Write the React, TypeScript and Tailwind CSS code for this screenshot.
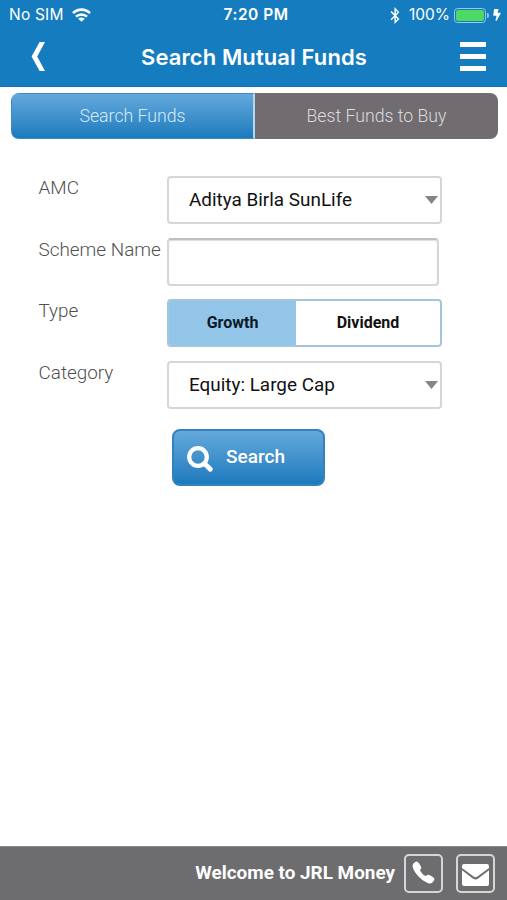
import type { ReactNode } from 'react'
import { FaBluetoothB, FaBolt } from 'react-icons/fa'
import { IoCall } from 'react-icons/io5'

function StatusBar() {
  return (
    <div className="grid h-[30px] grid-cols-3 items-center pl-[9px] pr-[6px] font-['Inter'] text-[15.5px] leading-[30px]">
      <div className="flex items-center gap-[8px]">
        <span className="tracking-[0.2px]">No SIM</span>
        <svg className="h-[14px] w-[19px]" viewBox="0 0 19 14" fill="none" stroke="currentColor" strokeWidth="2.6">
          <path d="M1 5.2C5.7.4 13.3.4 18 5.2" />
          <path d="M4 8.7c3-3 8-3 11 0" />
          <path d="M9.5 13.8 6.2 10.7c1.8-1.7 4.8-1.7 6.6 0z" fill="currentColor" stroke="none" />
        </svg>
      </div>
      <span className="pl-[2px] text-center font-semibold tracking-[0.5px]">7:20 PM</span>
      <div className="flex items-center justify-end">
        <FaBluetoothB className="mr-[7px] h-[17px] w-[14px]" />
        <span>100%</span>
        <span className="ml-[4px] h-[15px] w-[32px] rounded-[3.5px] border border-[#9cc8e6] p-px">
          <span className="block h-full w-full rounded-[2px] bg-[#4cd964]" />
        </span>
        <span className="ml-px h-[5px] w-[2px] rounded-r-full bg-[#9cc8e6]" />
        <FaBolt className="ml-[4px] h-[12px] w-[8px]" />
      </div>
    </div>
  )
}

function Header() {
  return (
    <header className="h-[87px] border-b border-[#1271b4] bg-[#167cc0] text-white">
      <StatusBar />
      <div className="flex h-[54px] items-center justify-between pl-[31px] pr-[21px]">
        <svg className="mb-[2px] h-[29px] w-[14px]" viewBox="0 0 14 29" fill="currentColor">
          <path d="M8.6 0H14L6.2 14.5 14 29H8.6L.6 14.5z" />
        </svg>
        <h1 className="ml-[3px] whitespace-nowrap font-['Inter'] text-[22px] font-semibold tracking-[0.1px]">
          Search Mutual Funds
        </h1>
        <div className="mb-px flex w-[26px] flex-col gap-[7px]">
          <span className="h-[5px] bg-white" />
          <span className="h-[5px] bg-white" />
          <span className="h-[5px] bg-white" />
        </div>
      </div>
    </header>
  )
}

function Row({ label, children }: { label: string; children: ReactNode }) {
  return (
    <div className="flex h-[48px] items-start">
      <label className="w-[129px] whitespace-nowrap pl-[0.5px] text-[18.9px] font-light leading-[23px] text-[#505050]">
        {label}
      </label>
      {children}
    </div>
  )
}

function Select({ value }: { value: string }) {
  return (
    <div className="flex h-[48px] w-[275px] items-center justify-between rounded-[4px] border-2 border-[#d6d6d6] pl-[20px] pr-[2px] text-[18.9px] text-[#111]">
      <span className="whitespace-nowrap">{value}</span>
      <svg className="h-[8px] w-[13px]" viewBox="0 0 13 8" fill="#858585">
        <path d="M0 0h13L6.5 8z" />
      </svg>
    </div>
  )
}

export default function App() {
  return (
    <div className="flex h-[900px] w-[507px] flex-col bg-white font-['Roboto',sans-serif]">
      <Header />

      <div className="ml-[11px] mr-[9px] mt-[6px] flex h-[46px] overflow-hidden rounded-[8px] text-[17.7px] font-light">
        <button className="w-[244px] border border-r-2 border-[#3a8cc5] border-r-[#b5d8ef] bg-linear-to-b from-[#63a9dc] to-[#197abd] pt-px text-[#d5eaf7]">
          Search Funds
        </button>
        <button className="flex-1 bg-[#706c70] pt-px text-[#dcdadc]">Best Funds to Buy</button>
      </div>

      <main className="flex flex-1 flex-col gap-[13.7px] pl-[38px] pt-[37px]">
        <Row label="AMC">
          <Select value="Aditya Birla SunLife" />
        </Row>
        <Row label="Scheme Name">
          <input className="h-[48px] w-[272px] rounded-[4px] border-2 border-[#d6d6d6] border-t-[#c0c0c0] shadow-[inset_0_1px_1px_#ddd]" />
        </Row>
        <Row label="Type">
          <div className="flex h-[48px] w-[275px] overflow-hidden rounded-[4px] border-2 border-[#a3c6dc] text-[16px] font-bold text-[#111]">
            <button className="w-[127px] bg-[#92c5e7] text-[#0a1a2a]">Growth</button>
            <button className="flex-1">Dividend</button>
          </div>
        </Row>
        <Row label="Category">
          <Select value="Equity: Large Cap" />
        </Row>
        <button className="ml-[134px] mt-[6px] flex h-[57px] w-[153px] items-center rounded-[8px] border-2 border-[#3282bb] bg-linear-to-b from-[#63a9dc] to-[#197abd] pl-[13px] text-[19px] font-medium text-white">
          <svg className="mt-[3px] h-[26px] w-[26px]" viewBox="0 0 26 26" fill="none" stroke="currentColor">
            <circle cx="11" cy="11" r="8.8" strokeWidth="4.2" />
            <path d="m17.5 17.5 5.8 5.8" strokeWidth="4.8" strokeLinecap="round" />
          </svg>
          <span className="ml-[13px]">Search</span>
        </button>
      </main>

      <footer className="flex h-[54px] items-center justify-end border-t border-[#8a8a8c] bg-[#6d6d6f] pr-[12px] text-white">
        <span className="mr-[9px] whitespace-nowrap text-[18.9px] font-bold">Welcome to JRL Money</span>
        <a className="mr-[13px] flex h-[39px] w-[39px] items-center justify-center rounded-[5px] border-2 border-[#d6d6d6]">
          <IoCall className="mb-[2px] mr-px h-[25px] w-[25px]" />
        </a>
        <a className="flex h-[39px] w-[39px] items-center justify-center rounded-[5px] border-2 border-[#d6d6d6]">
          <svg className="mt-[3px] h-[22px] w-[27px]" viewBox="0 0 27 22" fill="currentColor">
            <path d="M2 0h23a2 2 0 0 1 2 2v2L15.4 12.4a3 3 0 0 1-3.8 0L0 4V2a2 2 0 0 1 2-2z" />
            <path d="M0 6.2l10.8 8.2a4.6 4.6 0 0 0 5.4 0L27 6.2V20a2 2 0 0 1-2 2H2a2 2 0 0 1-2-2z" />
          </svg>
        </a>
      </footer>
    </div>
  )
}
